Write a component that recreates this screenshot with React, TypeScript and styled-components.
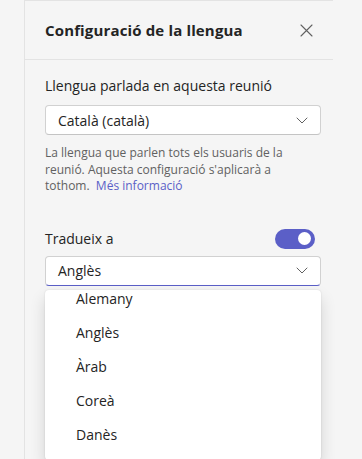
import { useEffect, useRef } from "react";
import styled, { createGlobalStyle } from "styled-components";

const GlobalStyle = createGlobalStyle`
    html, body {
        margin: 0;
        padding: 0;
        height: 100%;
        background: #f5f5f5;
        font-family: "Open Sans", "Noto Sans", sans-serif;
        color: #242424;
    }
    #root {
        height: 100%;
    }
`;

const PURPLE = "#5b5fc7";

const Page = styled.div`
    height: 100vh;
    display: flex;
    overflow: hidden;
    background: #f5f5f5;
`;

const Gutter = styled.div`
    width: 24px;
    flex: none;
`;

const Panel = styled.section`
    width: 308px;
    flex: none;
    display: flex;
    flex-direction: column;
    border-left: 1px solid #e3e3e3;
    border-top: 1px solid #e3e3e3;
`;

const Header = styled.header`
    flex: none;
    height: 58px;
    display: flex;
    align-items: center;
    justify-content: space-between;
    padding: 0 19px 0 20px;
    border-bottom: 1px solid #e3e3e3;
`;

const Title = styled.h2`
    margin: 0;
    font-size: 15px;
    font-weight: 700;
    letter-spacing: 0.15px;
    color: #242424;
`;

const CloseButton = styled.button`
    width: 16px;
    height: 16px;
    padding: 0;
    border: none;
    background: none;
    display: flex;
    align-items: center;
    justify-content: center;
    color: #616161;
`;

const Body = styled.div`
    flex: none;
    padding: 16px 12px 0 20px;
    display: flex;
    flex-direction: column;
`;

const Label = styled.div`
    font-size: 14px;
    line-height: 20px;
    color: #242424;
`;

const Select = styled.div<{ $active?: boolean }>`
    flex: none;
    height: 30px;
    box-sizing: border-box;
    margin-top: ${p => (p.$active ? "7px" : "9px")};
    display: flex;
    align-items: center;
    justify-content: space-between;
    padding: 0 12px;
    background: #fff;
    border: 1px solid #d1d1d1;
    border-bottom: 1px solid ${p => (p.$active ? PURPLE : "#c4c4c4")};
    border-radius: 4px;
    font-size: 14px;
    color: #242424;
`;

const Help = styled.p`
    margin: 10px 0 0;
    font-size: 12px;
    line-height: 16.5px;
    color: #616161;
    padding-right: 20px;
`;

const Link = styled.a`
    color: ${PURPLE};
    text-decoration: none;
`;

const ToggleRow = styled.div`
    margin-top: 34px;
    display: flex;
    align-items: center;
    justify-content: space-between;
    padding-right: 6px;
`;

const Toggle = styled.div<{ $on: boolean }>`
    width: 40px;
    height: 20px;
    box-sizing: border-box;
    border-radius: 10px;
    background: ${p => (p.$on ? PURPLE : "#fff")};
    display: flex;
    align-items: center;
    justify-content: ${p => (p.$on ? "flex-end" : "flex-start")};
    padding: 0 4px;
`;

const Knob = styled.span`
    width: 13px;
    height: 13px;
    border-radius: 50%;
    background: #fff;
`;

const Listbox = styled.div`
    flex: none;
    margin-top: 4px;
    padding-bottom: 12px;
    background: #fff;
    border-radius: 4px;
    box-shadow: 0 0 2px rgba(0, 0, 0, 0.12), 0 8px 16px rgba(0, 0, 0, 0.14);
    height: 170px;
    box-sizing: border-box;
    overflow: hidden;
`;

const Option = styled.div`
    height: 34px;
    display: flex;
    align-items: center;
    padding-left: 31px;
    font-size: 14px;
    color: #242424;
`;

const Chevron = () => (
    <svg width="12" height="7" viewBox="0 0 12 7" fill="none">
        <path d="M1 1l5 5 5-5" stroke="#616161" strokeWidth="1" strokeLinecap="round" strokeLinejoin="round" />
    </svg>
);

const languages = ["Alemany", "Anglès", "Àrab", "Coreà", "Danès"];

export default function App() {
    const listRef = useRef<HTMLDivElement>(null);

    useEffect(() => {
        // list is scrolled a little, first item partly hidden
        if (listRef.current) listRef.current.scrollTop = 8;
    }, []);

    return (
        <Page>
            <GlobalStyle />
            <Gutter />
            <Panel>
                <Header>
                    <Title>Configuració de la llengua</Title>
                    <CloseButton aria-label="Tanca">
                        <svg width="13" height="13" viewBox="0 0 13 13">
                            <path d="M1 1l11 11M12 1L1 12" stroke="#616161" strokeWidth="1.1" strokeLinecap="round" />
                        </svg>
                    </CloseButton>
                </Header>
                <Body>
                    <Label>Llengua parlada en aquesta reunió</Label>
                    <Select>
                        <span>Català (català)</span>
                        <Chevron />
                    </Select>
                    <Help>
                        La llengua que parlen tots els usuaris de la reunió. Aquesta configuració s'aplicarà a
                        tothom.&nbsp; <Link href="#">Més informació</Link>
                    </Help>
                    <ToggleRow>
                        <Label>Tradueix a</Label>
                        <Toggle $on>
                            <Knob />
                        </Toggle>
                    </ToggleRow>
                    <Select $active>
                        <span>Anglès</span>
                        <Chevron />
                    </Select>
                    <Listbox ref={listRef}>
                        {languages.map(l => (
                            <Option key={l}>{l}</Option>
                        ))}
                    </Listbox>
                </Body>
            </Panel>
        </Page>
    );
}
